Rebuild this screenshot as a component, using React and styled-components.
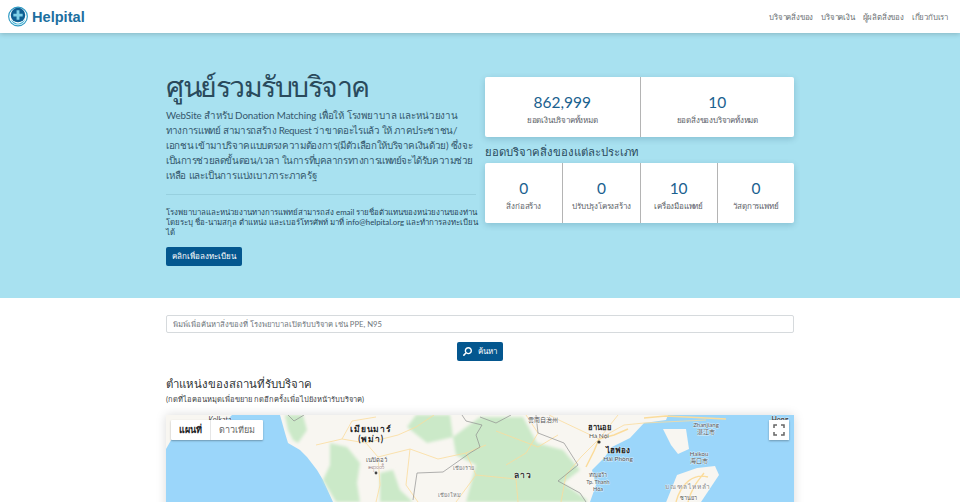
import React from 'react';
import styled, { createGlobalStyle } from 'styled-components';
import { FaSearch } from 'react-icons/fa';

const GlobalStyle = createGlobalStyle`
  html, body {
    margin: 0;
    height: 100%;
    overflow: hidden;
    background: #fff;
    font-family: Lato, "Noto Sans", sans-serif;
    color: #212529;
  }
  * { box-sizing: border-box; }
  h1, h2, h3, p { margin: 0; font-weight: 400; }
`;

const Nav = styled.nav`
  position: relative;
  z-index: 2;
  height: 33px;
  padding: 0 12px 0 8px;
  display: flex;
  align-items: center;
  justify-content: space-between;
  background: #fff;
  box-shadow: 0 1px 5px rgba(0, 0, 0, 0.2);
`;
const Brand = styled.div`
  display: flex;
  align-items: center;
  gap: 4px;
  font-family: "Liberation Sans", sans-serif;
  font-size: 14.6px;
  font-weight: 700;
  color: #1c6f9f;
`;
const NavLinks = styled.div`
  display: flex;
  gap: 8px;
  font-size: 7.8px;
  letter-spacing: -0.2px;
  color: #6b6f73;
`;
const Hero = styled.section`
  height: 265px;
  background: #a8e1f0;
  padding-top: 34px;
  display: flex;
  justify-content: center;
`;
const Container = styled.div`
  width: 628px;
`;
const HeroGrid = styled.div`
  display: grid;
  grid-template-columns: 310px 309px;
  gap: 9px;
`;
const Title = styled.h1`
  font-size: 28.5px;
  line-height: 38px;
  letter-spacing: -1.5px;
  font-weight: 300;
  color: #2a4a5c;
`;
const Lead = styled.p`
  margin-top: 3px;
  font-size: 9.8px;
  line-height: 15px;
  color: #35586d;
`;
const Line = styled.span`
  display: block;
  white-space: nowrap;
  letter-spacing: ${(p) => p.$spacing || 0}px;
`;
const Rule = styled.hr`
  margin: 11px 0 12px;
  border: 0;
  border-top: 1px solid #97d0df;
`;
const Note = styled.p`
  font-size: 7.85px;
  line-height: 10px;
  color: #27465a;
`;
const Button = styled.button`
  display: inline-flex;
  align-items: center;
  justify-content: center;
  gap: 6px;
  height: 19px;
  padding: 0 6px;
  border: 0;
  border-radius: 2px;
  background: #04578f;
  color: #fff;
  font-family: inherit;
  font-size: 8px;
`;
const RegisterButton = styled(Button)`
  margin-top: 10px;
`;
const StatsColumn = styled.div`
  padding-top: 10px;
`;
const StatsCard = styled.div`
  display: grid;
  grid-template-columns: repeat(${(p) => p.$cols}, 1fr);
  height: 60px;
  border-radius: 2px;
  background: #fff;
  box-shadow: 0 2px 6px rgba(0, 60, 90, 0.2);
`;
const Stat = styled.div`
  display: flex;
  flex-direction: column;
  align-items: center;
  padding-top: 15px;
  border-left: 1px solid #b4b4b4;
  &:first-child { border-left: 0; }
`;
const StatValue = styled.div`
  font-size: 15.5px;
  line-height: 21px;
  color: #1a618f;
`;
const StatLabel = styled.div`
  font-size: 8px;
  line-height: 14px;
  letter-spacing: -0.2px;
  color: #5c6268;
`;
const StatsHeading = styled.h3`
  margin: 6px 0 3px;
  font-size: 11.3px;
  line-height: 17px;
  color: #2a4a5c;
`;
const Main = styled.main`
  display: flex;
  justify-content: center;
  padding-top: 17px;
`;
const SearchInput = styled.input`
  display: block;
  width: 100%;
  height: 18px;
  padding: 0 6px;
  border: 1px solid #d6dadd;
  border-radius: 2px;
  font-family: inherit;
  font-size: 7.65px;
  &::placeholder { color: #6f767c; opacity: 1; }
`;
const SearchRow = styled.div`
  display: flex;
  justify-content: center;
  margin-top: 9px;
`;
const SectionTitle = styled.h2`
  margin-top: 14px;
  font-size: 11.4px;
  line-height: 18px;
  color: #2f3336;
`;
const SectionNote = styled.p`
  font-size: 7.5px;
  line-height: 14px;
  color: #3d4144;
`;
const MapBox = styled.div`
  position: relative;
  margin-top: 8px;
  height: 300px;
  overflow: hidden;
  background: #9bd6fa;
  box-shadow: 0 0 10px rgba(0, 0, 0, 0.15);
  svg.map { display: block; }
`;
const MapType = styled.div`
  position: absolute;
  top: 5px;
  left: 5px;
  display: flex;
  height: 20px;
  background: #fff;
  border-radius: 1px;
  box-shadow: 0 1px 2px rgba(0, 0, 0, 0.3);
`;
const MapTypeItem = styled.div`
  display: flex;
  align-items: center;
  padding: 0 8px;
  font-size: 9px;
  font-weight: ${(p) => (p.$active ? 700 : 400)};
  color: ${(p) => (p.$active ? '#222' : '#666')};
  border-left: ${(p) => (p.$active ? '0' : '1px solid #e6e6e6')};
`;
const Fullscreen = styled.div`
  position: absolute;
  top: 5px;
  right: 5px;
  width: 20px;
  height: 20px;
  display: flex;
  align-items: center;
  justify-content: center;
  background: #fff;
  box-shadow: 0 1px 2px rgba(0, 0, 0, 0.3);
`;
const MapLabel = styled.text`
  font-family: Lato, "Noto Sans", "Noto Sans CJK SC", sans-serif;
  font-size: ${(p) => p.$size || 7}px;
  font-weight: ${(p) => (p.$bold ? 700 : 400)};
  fill: ${(p) => p.$color || '#555'};
  text-anchor: middle;
  letter-spacing: ${(p) => p.$spacing || 0}px;
  paint-order: stroke;
  stroke: rgba(255, 255, 255, 0.6);
  stroke-width: 1px;
`;

const Logo = () => (
  <svg width="20" height="21" viewBox="0 0 21 21">
    <circle cx="10.5" cy="10.5" r="9.800" fill="#fff" stroke="#2d9ac4" strokeWidth="1.200" />
    <circle cx="10.500" cy="9" r="7.600" fill="#0f5f92" />
    <path d="M9 4h3v3.600h3.400v3H12v3.400H9v-3.400H5.600v-3H9z" fill="#7fd0e8" />
    <path d="M3 13c2 3 5 4.600 7.500 5 2.500-.4 5.500-2 7.500-5-1 4-4 6-7.500 6S4 17 3 13z" fill="#3fb1d4" />
  </svg>
);

const leadLines = [
  { text: 'WebSite สำหรับ Donation Matching เพื่อให้ โรงพยาบาล และหน่วยงาน', spacing: -0.1 },
  { text: 'ทางการแพทย์ สามารถสร้าง Request ว่าขาดอะไรแล้ว ให้ ภาคประชาชน/', spacing: -0.33 },
  { text: 'เอกชน เข้ามาบริจาคแบบตรงความต้องการ(มีตัวเลือกให้บริจาคเงินด้วย) ซึ่งจะ', spacing: -0.34 },
  { text: 'เป็นการช่วยลดขั้นตอน/เวลา ในการที่บุคลากรทางการแพทย์จะได้รับความช่วย', spacing: -0.42 },
  { text: 'เหลือ และเป็นการแบ่งเบาภาระภาครัฐ', spacing: -0.2 },
];
const noteLines = [
  'โรงพยาบาลและหน่วยงานทางการแพทย์สามารถส่ง email รายชื่อตัวแทนของหน่วยงานของท่าน',
  'โดยระบุ ชื่อ-นามสกุล ตำแหน่ง และเบอร์โทรศัพท์ มาที่ info@helpital.org และทำการลงทะเบียน',
  'ได้',
];
const stats = [
  { value: '862,999', label: 'ยอดเงินบริจาคทั้งหมด' },
  { value: '10', label: 'ยอดสิ่งของบริจาคทั้งหมด' },
];
const categories = [
  { value: '0', label: 'สิ่งก่อสร้าง' },
  { value: '0', label: 'ปรับปรุงโครงสร้าง' },
  { value: '10', label: 'เครื่องมือแพทย์' },
  { value: '0', label: 'วัสดุการแพทย์' },
];
const navItems = ['บริจาคสิ่งของ', 'บริจาคเงิน', 'ผู้ผลิตสิ่งของ', 'เกี่ยวกับเรา'];

const LAND = '#f8f6f1';
const GREEN = '#cbe9c8';
const ROAD = '#fbdc9c';
const BORDER = '#8f8f8f';

const MapArt = () => (
  <svg className="map" width="628" height="300" viewBox="0 0 628 300">
    <defs>
      <filter id="soft">
        <feGaussianBlur stdDeviation="1.500" />
      </filter>
    </defs>
    <rect width="628" height="300" fill="#9bd6fa" />
    {/* india coast */}
    <path d="M0 0H66L58 8 40 5 24 8 8 20 0 34z" fill={LAND} />
    {/* mainland */}
    <path d="M114 0L119 18 122 28 134 35 141 42 151 55 157 65 167 87H424L430 70 426 55 438 43 446 32 464 23 478 8 500 5 502 0z" fill={LAND} />
    {/* green areas */}
    <g fill={GREEN} filter="url(#soft)">
      <path d="M119 0H137L141 15 132 28 127 25 122 15z" />
      <path d="M164 28L181 32 194 48 191 68 194 87H170L157 65 164 50z" />
      <path d="M214 58L227 55 234 75 247 87H214z" />
      <path d="M250 0H284L287 22 261 28 241 12z" />
      <path d="M287 22L314 2H357L371 28 397 35 414 55 397 68 421 85V87H300L310 50 290 40z" />
    </g>
    {/* peninsula + hainan */}
    <path d="M497 14H520L523 34 512 39 505 30z" fill={LAND} />
    <path d="M499 90L511 60 531 53 549 51 553 60 543 75 533 90z" fill={LAND} />
    <path d="M510 87C515 68 528 58 542 62M522 87C526 72 532 66 538 58" stroke={ROAD} strokeWidth="1.400" fill="none" />
    {/* roads */}
    <g stroke={ROAD} strokeWidth="0.800" fill="none">
      <path d="M150 30L176 24 200 28 212 42 214 70 210 87" />
      <path d="M176 24L186 6 210 2M200 28L232 20 250 12 268 0" />
      <path d="M212 42L244 34 272 44 300 38 320 30M244 34L240 70 252 87" />
      <path d="M433 24L452 0M433 24L458 10 478 8 540 5M433 24L415 42 400 60 395 87M433 24L395 6 383 0" />
      <path d="M330 16L372 32 392 20M310 60L350 64 352 87M290 87L310 60 300 38" />
      <path d="M360 0L372 18 360 38 340 50" />
    </g>
    <g stroke={ROAD} strokeWidth="1.500" fill="none">
      <path d="M433 24L448 20 462 14M433 24L428 36 420 52M478 3L500 1 560 4" />
    </g>
    {/* borders */}
    <g stroke={BORDER} strokeWidth="0.700" fill="none">
      <path d="M247 85L251 58 277 57 304 38 314 32 310 20 316 10 300 6 296 0" />
      <path d="M314 2L330 8 345 0" />
      <path d="M370 0L372 18 398 28 412 50 392 66 414 78 420 87" />
      <path d="M122 0L128 6 138 0" />
    </g>
    {/* labels */}
    <MapLabel x="54" y="7" $size="7" $color="#444">Kolkata</MapLabel>
    <MapLabel x="205" y="17" $size="8.500" $bold $color="#222" $spacing="0.800">เมียนมาร์</MapLabel>
    <MapLabel x="205" y="27" $size="8.500" $bold $color="#222" $spacing="0.800">(พม่า)</MapLabel>
    <MapLabel x="210" y="47" $size="6" $color="#555">เนปิดอว์</MapLabel>
    <MapLabel x="210" y="54" $size="5.500" $color="#8a6a6a">ဧရာဝတီ</MapLabel>
    <circle cx="210" cy="58" r="1.400" fill="#444" />
    <MapLabel x="297" y="55" $size="5.500" $color="#777">เชียงราย</MapLabel>
    <MapLabel x="283" y="82" $size="5.500" $color="#777">เชียงใหม่</MapLabel>
    <MapLabel x="377" y="7" $size="6" $color="#555">雲南自治州</MapLabel>
    <MapLabel x="433" y="15" $size="7.500" $bold $color="#222">ฮานอย</MapLabel>
    <MapLabel x="433" y="23" $size="6.500" $color="#555">Hà Nội</MapLabel>
    <circle cx="433" cy="27" r="1.600" fill="#333" />
    <MapLabel x="452" y="38" $size="8" $bold $color="#222">ไฮฟอง</MapLabel>
    <MapLabel x="452" y="46" $size="6.500" $color="#555">Hải Phòng</MapLabel>
    <MapLabel x="432" y="62" $size="5.500" $color="#555">ทัญฮว้า</MapLabel>
    <MapLabel x="432" y="69" $size="5.500" $color="#555">Tp. Thanh</MapLabel>
    <MapLabel x="432" y="76" $size="5.500" $color="#555">Hóa</MapLabel>
    <MapLabel x="357" y="63" $size="8.500" $bold $color="#333" $spacing="1">ลาว</MapLabel>
    <MapLabel x="540" y="12" $size="6" $color="#555">Zhanjiang</MapLabel>
    <MapLabel x="540" y="19" $size="6" $color="#555">湛江市</MapLabel>
    <MapLabel x="533" y="41" $size="6" $color="#555">Haikou</MapLabel>
    <MapLabel x="533" y="48" $size="6" $color="#555">海口市</MapLabel>
    <MapLabel x="522" y="74" $size="6.500" $color="#888" $spacing="1">มณฑลไหหลำ</MapLabel>
    <MapLabel x="522" y="85" $size="5.500" $color="#555">ซานย่า</MapLabel>
    <MapLabel x="614" y="7" $size="7" $bold $color="#444">Hong</MapLabel>
  </svg>
);

export default function App() {
  return (
    <>
      <GlobalStyle />
      <Nav>
        <Brand>
          <Logo />
          Helpital
        </Brand>
        <NavLinks>
          {navItems.map((item) => (
            <span key={item}>{item}</span>
          ))}
        </NavLinks>
      </Nav>
      <Hero>
        <Container>
          <HeroGrid>
            <div>
              <Title>ศูนย์รวมรับบริจาค</Title>
              <Lead>
                {leadLines.map((line) => (
                  <Line key={line.text} $spacing={line.spacing}>
                    {line.text}
                  </Line>
                ))}
              </Lead>
              <Rule />
              <Note>
                {noteLines.map((line) => (
                  <Line key={line}>{line}</Line>
                ))}
              </Note>
              <RegisterButton>คลิกเพื่อลงทะเบียน</RegisterButton>
            </div>
            <StatsColumn>
              <StatsCard $cols={2}>
                {stats.map((s) => (
                  <Stat key={s.label}>
                    <StatValue>{s.value}</StatValue>
                    <StatLabel>{s.label}</StatLabel>
                  </Stat>
                ))}
              </StatsCard>
              <StatsHeading>ยอดบริจาคสิ่งของแต่ละประเภท</StatsHeading>
              <StatsCard $cols={4}>
                {categories.map((s) => (
                  <Stat key={s.label}>
                    <StatValue>{s.value}</StatValue>
                    <StatLabel>{s.label}</StatLabel>
                  </Stat>
                ))}
              </StatsCard>
            </StatsColumn>
          </HeroGrid>
        </Container>
      </Hero>
      <Main>
        <Container>
          <SearchInput placeholder="พิมพ์เพื่อค้นหาสิ่งของที่ โรงพยาบาลเปิดรับบริจาค เช่น PPE, N95" />
          <SearchRow>
            <Button>
              <FaSearch size={9} style={{ transform: 'scaleX(-1)' }} />
              ค้นหา
            </Button>
          </SearchRow>
          <SectionTitle>ตำแหน่งของสถานที่รับบริจาค</SectionTitle>
          <SectionNote>(กดที่ไอคอนหมุดเพื่อขยาย กดอีกครั้งเพื่อไปยังหน้ารับบริจาค)</SectionNote>
          <MapBox>
            <MapArt />
            <MapType>
              <MapTypeItem $active>แผนที่</MapTypeItem>
              <MapTypeItem>ดาวเทียม</MapTypeItem>
            </MapType>
            <Fullscreen>
              <svg width="12" height="12" viewBox="0 0 12 12" fill="none" stroke="#666" strokeWidth="1.500">
                <path d="M1 4V1h3M8 1h3v3M11 8v3H8M4 11H1V8" />
              </svg>
            </Fullscreen>
          </MapBox>
        </Container>
      </Main>
    </>
  );
}
